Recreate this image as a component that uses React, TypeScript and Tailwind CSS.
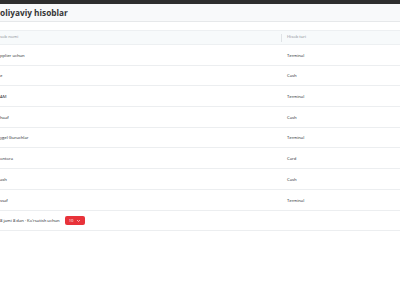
const ROWS = [
  { name: "pplier uchun", type: "Terminal" },
  { name: "e", type: "Cash" },
  { name: "AM", type: "Terminal" },
  { name: "haaf", type: "Cash" },
  { name: "ygel Guruchlar", type: "Terminal" },
  { name: "ontora", type: "Card" },
  { name: "ash", type: "Cash" },
  { name: "ssaf", type: "Terminal" },
]

const App = () => {
  return (
    <div
      className="h-[300px] w-[400px] overflow-hidden bg-white text-[#333]"
      style={{ fontFamily: '"Open Sans", "Noto Sans", sans-serif' }}
    >
      <div className="h-[4px] bg-[#2e2e2e]" />
      <div className="flex h-[18px] items-center border-b border-[#e6e8ea] bg-[#f8f9fa] pt-[1px]">
        <h1 className="text-[8.3px] leading-none font-bold text-[#363636]">
          oliyaviy hisoblar
        </h1>
      </div>

      <div className="mt-[8px]">
        <div className="flex h-[15px] items-center border-y border-[#edf0f2] bg-[#f7fafb] text-[4.2px] text-[#8a9096]">
          <div className="w-[281px]">sob nomi</div>
          <div className="flex items-center">
            <span className="h-[8px] w-px bg-[#dfe3e6]" />
            <span className="pl-[5px]">Hisob turi</span>
          </div>
        </div>

        {ROWS.map((row) => (
          <div
            key={row.name}
            className="flex h-[20.7px] items-center border-b border-[#eceef0] pt-[2px] text-[4.2px] text-[#22262a]"
          >
            <div className="w-[281px]">{row.name}</div>
            <div className="pl-[6px]">{row.type}</div>
          </div>
        ))}

        <div className="flex h-[20.5px] items-center gap-[3px] border-b border-[#eceef0] pt-[1px] text-[4.2px] text-[#22262a]">
          <span>8 jami 8 dan · Ko'rsatish uchun</span>
          <span className="ml-[2px] flex h-[9px] items-center gap-[3px] rounded-[2px] bg-[#e8333a] px-[4px] text-white">
            10
            <svg width="5" height="5" viewBox="0 0 10 10" fill="none">
              <path d="M2 4l3 3 3-3" stroke="white" strokeWidth="1.2" />
            </svg>
          </span>
        </div>
      </div>
    </div>
  )
}

export default App
